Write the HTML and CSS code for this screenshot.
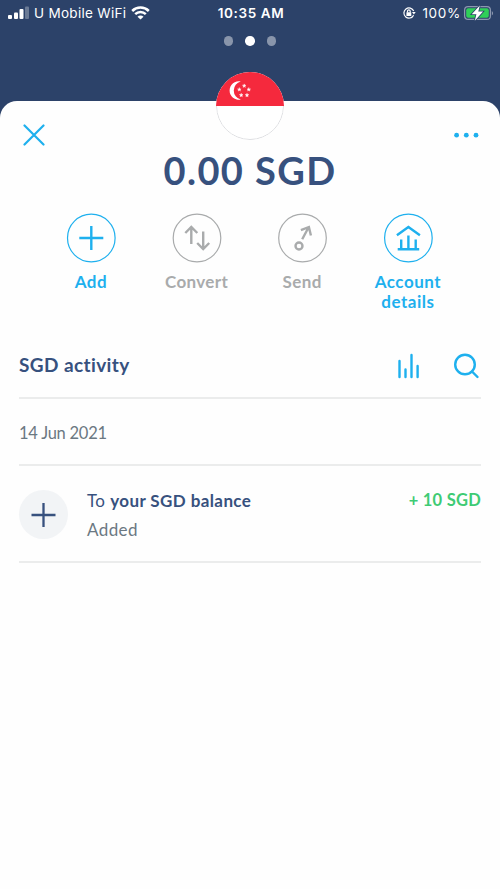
FILE: index.html
```html
<!DOCTYPE html>
<html lang="en">
<head>
<meta charset="utf-8">
<title>SGD balance</title>
<link rel="stylesheet" href="styles.css">
</head>
<body>
<header class="top">
  <div class="status">
    <div class="status-left">
      <svg width="22" height="14" viewBox="0 0 22 14" fill="#fff"><rect x="0" y="9" width="4" height="4" rx="1"/><rect x="6" y="6.500" width="4" height="6.500" rx="1"/><rect x="11.500" y="3" width="4" height="10" rx="1"/><rect x="17" y="0.500" width="4" height="12.500" rx="1" opacity=".3"/></svg>
      <span class="carrier">U Mobile WiFi</span>
      <svg width="19" height="14" viewBox="0 0 19 14" fill="none" stroke="#fff" stroke-width="2.500"><path d="M1.200 5a11.800 11.800 0 0 1 16.600 0M4.200 8.200a7.600 7.600 0 0 1 10.600 0"/><path d="M9.500 13.500L6.500 10.700a4.200 4.200 0 0 1 6 0z" fill="#fff" stroke="none"/></svg>
    </div>
    <div class="clock">10:35 AM</div>
    <div class="status-right">
      <svg width="14" height="14" viewBox="0 0 14 14" fill="none" stroke="#fff" stroke-width="1.200"><path d="M11.600 9.200A5.100 5.100 0 1 1 11.700 5"/><path d="M10 5.900h3.700l-1.800 2.500z" fill="#fff" stroke="none"/><rect x="4.400" y="6.300" width="4.900" height="3.600" rx=".5" fill="#fff" stroke="none"/><path d="M5.500 6.500V5.200a1.350 1.350 0 0 1 2.700 0v1.300"/></svg>
      <span class="percent">100%</span>
      <svg width="30" height="18" viewBox="0 0 30 18"><rect x=".6" y="2.600" width="25.800" height="12.800" rx="3.500" fill="none" stroke="#8c98af" stroke-width="1.200"/><path d="M27.800 7v4.500c1.700-.7 1.700-3.800 0-4.500z" fill="#8c98af"/><rect x="2.200" y="4.200" width="22.600" height="9.600" rx="2" fill="#2fd058"/><path d="M15.800 1.500L7.700 10.200h4.700L10.800 16.800l8.300-9.200h-4.800z" fill="#fff" stroke="#2c4269" stroke-width="1.600" paint-order="stroke"/></svg>
    </div>
  </div>
  <div class="pager"><i></i><i class="on"></i><i></i></div>
</header>
<main class="card">
  <svg class="flag" width="68" height="68" viewBox="0 0 68 68">
    <defs><clipPath id="round"><circle cx="34" cy="34" r="34"/></clipPath>
    <path id="star" d="M0-1.900L.5-.6 1.800-.6 .8.300 1.100 1.600 0 .8-1.100 1.600-.8.300-1.800-.6-.5-.6z"/></defs>
    <g clip-path="url(#round)"><path fill="#fff" d="M0 0h68v68H0z"/><circle cx="34" cy="34" r="33.500" fill="none" stroke="#dedfe2"/><path fill="#f5293d" d="M0 0h68v34H0z"/></g>
    <path d="M24.800 9.400a9.300 9.300 0 1 0 0 18.200a9.400 9.400 0 0 1 0-18.200z" fill="#fff"/>
    <g fill="#fff" stroke="#fff" stroke-width=".4"><use href="#star" x="28.200" y="13.800"/><use href="#star" x="23.300" y="17.500"/><use href="#star" x="32.800" y="17.500"/><use href="#star" x="25.200" y="23.200"/><use href="#star" x="31" y="23.200"/></g>
  </svg>
  <div class="card-top">
    <svg width="22" height="22" viewBox="0 0 22 22" fill="none" stroke="#1eb0ee" stroke-width="2.200" stroke-linecap="round"><path d="M1.500 1.500l19 19M20.500 1.500l-19 19"/></svg>
    <svg width="26" height="6" viewBox="0 0 26 6" fill="#1eb0ee"><circle cx="2.600" cy="3.200" r="2.400"/><circle cx="12.300" cy="3.200" r="2.400"/><circle cx="22" cy="3.200" r="2.400"/></svg>
  </div>
  <h1>0.00 SGD</h1>
  <nav class="actions">
    <div class="action"><svg width="50" height="50" viewBox="0 0 50 50"><circle cx="25.300" cy="25" r="23.800"/><path class="thick" d="M25.300 13v24M13.300 25h24"/></svg><span>Add</span></div>
    <div class="action off convert"><svg width="50" height="50" viewBox="0 0 50 50"><circle cx="25" cy="25" r="23.800"/><path class="thick" d="M19.300 31V14.500M13.300 20l6-6 6 6M31.200 18.500V35.500M25.200 30l6 6 6-6"/></svg><span>Convert</span></div>
    <div class="action off"><svg width="50" height="50" viewBox="0 0 50 50"><circle cx="25.500" cy="25" r="23.800"/><circle class="thick" cx="22" cy="33" r="3.500"/><path class="thick" d="M25.200 26.300L31.500 14.500M23.900 17.100l8-3.100 2 8.500"/></svg><span>Send</span></div>
    <div class="action"><svg width="50" height="50" viewBox="0 0 50 50"><circle cx="25.400" cy="25" r="23.800"/><path class="thick" d="M13.900 22.300L25.400 14l11.500 8.300M14.700 36.200h21.500M18.200 36v-9.500M25.400 36V22.500M32.700 36v-9.500"/></svg><span>Account<br>details</span></div>
  </nav>
  <section class="activity">
    <div class="heading">
      <h2>SGD activity</h2>
      <div class="tools">
        <svg width="24" height="28" viewBox="0 0 24 28" fill="none" stroke="#1eb0ee" stroke-width="2.400" stroke-linecap="round"><path d="M2.500 9v16M8.500 17.500V25M14.500 3v22M20.600 14v11"/></svg>
        <svg width="28" height="28" viewBox="0 0 28 28" fill="none" stroke="#1eb0ee" stroke-width="2.400" stroke-linecap="round"><circle cx="13" cy="12.500" r="9.800"/><path d="M20 19.500l5.500 5.500"/></svg>
      </div>
    </div>
    <div class="date"><span>14 Jun 2021</span></div>
    <div class="entry">
      <div class="badge"><svg width="26" height="26" viewBox="0 0 26 26" stroke="#37517e" stroke-width="2.300"><path d="M12.500 1v24M.5 13h24"/></svg></div>
      <div class="desc"><div>To <b>your SGD balance</b></div><div class="added">Added</div></div>
      <div class="amount">+ 10 SGD</div>
    </div>
  </section>
</main>
</body>
</html>
```
FILE: styles.css
```css
* { box-sizing: border-box; }
body { margin: 0; height: 889px; background: #2c4269; font-family: Lato, "Liberation Sans", sans-serif; color: #37517e; overflow: hidden; }
svg { display: block; flex: none; }
.top { height: 101px; color: #fff; font-family: Inter, sans-serif; }
.status { display: grid; grid-template-columns: 1fr auto 1fr; align-items: center; height: 26px; padding: 0 6px 0 8px; font-size: 13.500px; }
.status-left, .status-right { display: flex; align-items: center; }
.status-right { justify-content: flex-end; }
.carrier { margin: 0 5px 0 4px; letter-spacing: .3px; white-space: nowrap; }
.clock { font-weight: 600; letter-spacing: .6px; }
.percent { margin: 0 3px 0 6px; letter-spacing: .7px; }
.pager { display: flex; justify-content: center; gap: 12px; padding-top: 10px; }
.pager i { width: 9.500px; height: 9.500px; border-radius: 50%; background: #8995ab; }
.pager .on { background: #fff; }
.card { position: relative; height: 788px; background: #fefefe; border-radius: 17px 17px 0 0; padding: 23px 19px 0; }
.flag { position: absolute; top: -29px; left: 216px; }
.card-top { display: flex; justify-content: space-between; align-items: center; height: 22px; padding: 0 1px 0 4px; }
h1 { margin: 2px 0 0; height: 44px; line-height: 44px; font-size: 38px; font-weight: 700; text-align: center; letter-spacing: 1.400px; white-space: nowrap; }
.actions { display: grid; grid-template-columns: repeat(4, 105.700px); margin: 21px 0 0 19px; height: 121px; }
.action { display: flex; flex-direction: column; align-items: center; color: #1eb0ee; font-size: 17px; font-weight: 700; line-height: 20px; text-align: center; letter-spacing: .5px; }
.action svg { fill: none; stroke: currentColor; stroke-width: 1.200; margin-bottom: 9px; }
.action .thick { stroke-width: 2.400; }
.convert { letter-spacing: .35px; }
.off { color: #a9abac; }
.heading { display: flex; justify-content: space-between; align-items: center; height: 65px; border-bottom: 2px solid #ebecec; }
h2 { margin: 0 0 3px; font-size: 19px; font-weight: 700; letter-spacing: .4px; }
.tools { display: flex; gap: 31px; margin: 0 1px 0 0; }
.date { height: 67px; padding-top: 3px; display: flex; align-items: center; border-bottom: 2px solid #ebecec; color: #6b7882; font-size: 16.500px; letter-spacing: -.25px; }
.entry { display: flex; height: 97px; border-bottom: 2px solid #ebecec; font-size: 17px; }
.badge { margin-top: 24px; width: 49px; height: 49px; border-radius: 50%; background: #f2f4f6; display: grid; place-items: center; }
.desc { margin: 24px 0 0 19px; line-height: 22px; flex: 1; letter-spacing: .4px; }
.added { margin-top: 7px; color: #6b7882; }
.amount { margin-top: 23px; line-height: 22px; color: #3ecb74; font-weight: 700; font-size: 16.500px; letter-spacing: .25px; }
```
